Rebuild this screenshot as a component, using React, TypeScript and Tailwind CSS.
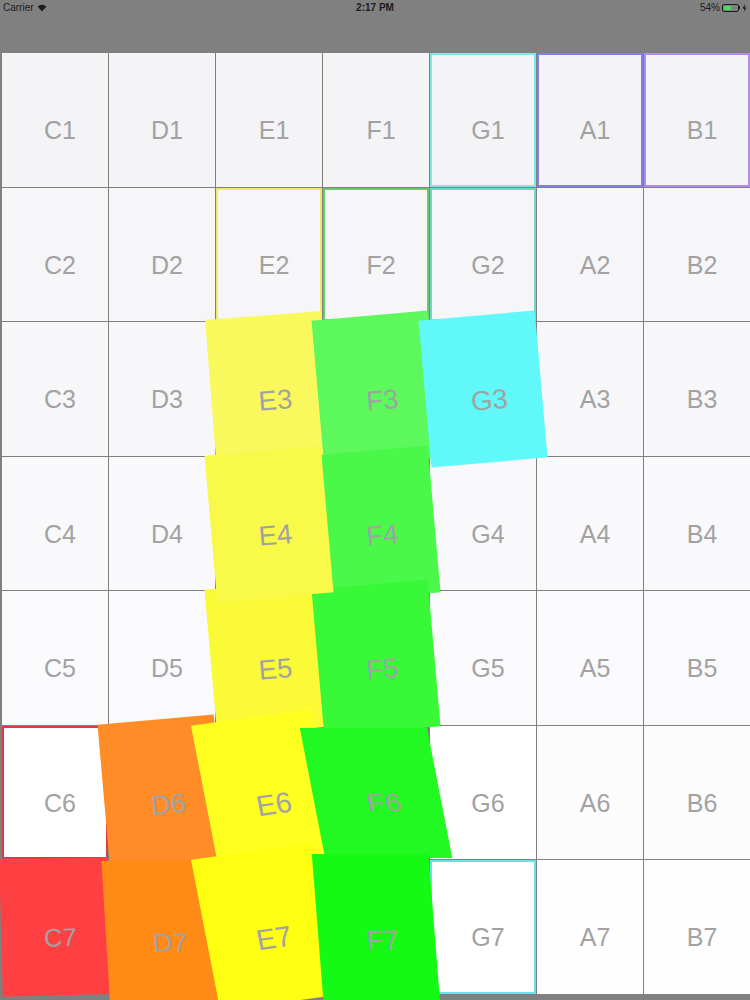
import React from 'react';

const notes = ['C', 'D', 'E', 'F', 'G', 'A', 'B'];

// background of a plain cell, getting whiter towards the bottom
const rowBg = [
  'bg-[#f4f3f6]',
  'bg-[#f6f5f8]',
  'bg-[#f7f7f9]',
  'bg-[#f9f9fb]',
  'bg-[#fafafc]',
  'bg-[#fcfcfd]',
  'bg-[#fefeff]',
];

// outlined cells
const outlined: Record<string, string> = {
  G1: 'border-2 border-[#7ee8e2]',
  A1: 'border-2 border-[#8080e4]',
  B1: 'border-2 border-[#b08cee]',
  E2: 'border-2 border-[#ecec6a]',
  F2: 'border-2 border-[#6cc86c]',
  G2: 'border-2 border-[#6ed8c8]',
  C6: 'border-2 border-[#e03a3a]',
  G7: 'border-2 border-[#66e2ea]',
};

const whiteCells = ['C6', 'G6', 'G7'];

// lit tiles, tipped over a little
const lit: Record<string, string> = {
  E3: 'bg-[#f9f95e] [transform:rotate(-4.5deg)_scale(1.1)]',
  F3: 'bg-[#5cf85c] [transform:rotate(-5deg)_scale(1.1)]',
  G3: 'bg-[#60f8f8] [transform:rotate(-5deg)_scale(1.1)]',
  E4: 'bg-[#f9f94a] [transform:rotate(-5deg)_scale(1.1)] z-[1]',
  F4: 'bg-[#4af84a] [transform:rotate(-5deg)_scale(1.1)]',
  E5: 'bg-[#fafa36] [transform:rotate(-5deg)_scale(1.1)]',
  F5: 'bg-[#38f838] [transform:rotate(-5deg)_scale(1.1)]',
  D6: 'bg-[#ff8c26] [transform:rotate(-5deg)_scale(1.1)]',
  E6: 'bg-[#ffff20] [transform:translateX(-3px)_rotate(-8deg)_skewX(3deg)_scale(1.15)]',
  F6: 'bg-[#22f922] [transform:skewX(11deg)_scale(1.2,0.97)]',
  C7: 'bg-[#ff4042] [transform:rotate(-1.5deg)_scale(1.02)]',
  D7: 'bg-[#ff8a16] [transform:translate(2px,5px)_skewX(3.5deg)_scale(1.1,1.06)]',
  E7: 'bg-[#ffff12] [transform:translateX(-3px)_rotate(-8deg)_skewX(3deg)_scale(1.15)]',
  F7: 'bg-[#14fa14] [transform:translateY(2px)_skewX(4.5deg)_scale(1.1,1.12)]',
};

function Wifi() {
  return (
    <svg width="10" height="8" viewBox="0 0 10 8" className="ml-[3px]">
      <path d="M5 7.5 L0.6 2.6 A6.4 6.4 0 0 1 9.4 2.6 Z" fill="#1c1c1c" />
    </svg>
  );
}

function Battery() {
  return (
    <div className="flex items-center ml-[2px]">
      <div className="w-[17px] h-[8px] border border-[#1c1c1c] rounded-[2px] p-px">
        <div className="h-full w-[54%] bg-[#4cd964] rounded-[1px]" />
      </div>
      <div className="w-[1px] h-[3px] bg-[#1c1c1c]" />
      <svg width="5" height="8" viewBox="0 0 5 8" className="ml-[2px]">
        <path d="M3 0 L0.5 4.4 H2.3 L1.8 8 L4.5 3.4 H2.7 Z" fill="#1c1c1c" />
      </svg>
    </div>
  );
}

export default function App() {
  return (
    <div className="w-[750px] h-[1000px] overflow-hidden bg-[#808080] font-['Liberation_Sans',Arial,sans-serif]">
      <div className="grid grid-cols-3 items-center h-[14px] px-[3px] text-[10px] text-[#1c1c1c]">
        <div className="flex items-center">
          Carrier
          <Wifi />
        </div>
        <div className="text-center font-semibold">2:17 PM</div>
        <div className="flex items-center justify-end">
          54%
          <Battery />
        </div>
      </div>

      <div className="mt-[39px] pl-[2px] grid grid-cols-7 grid-rows-7 gap-px h-[941px]">
        {Array.from({ length: 7 }).map((_, r) =>
          notes.map((n) => {
            const key = `${n}${r + 1}`;
            let look = rowBg[r];
            if (lit[key]) look = lit[key];
            else if (whiteCells.includes(key)) look = `bg-white ${outlined[key] ?? ''}`;
            else if (outlined[key]) look = `${rowBg[r]} ${outlined[key]}`;
            return (
              <div
                key={key}
                className={`${look} box-border flex items-center justify-center pt-[22px] pl-[10px] text-[25px] text-[#a2a2a2]`}
              >
                {key}
              </div>
            );
          })
        )}
      </div>
    </div>
  );
}
